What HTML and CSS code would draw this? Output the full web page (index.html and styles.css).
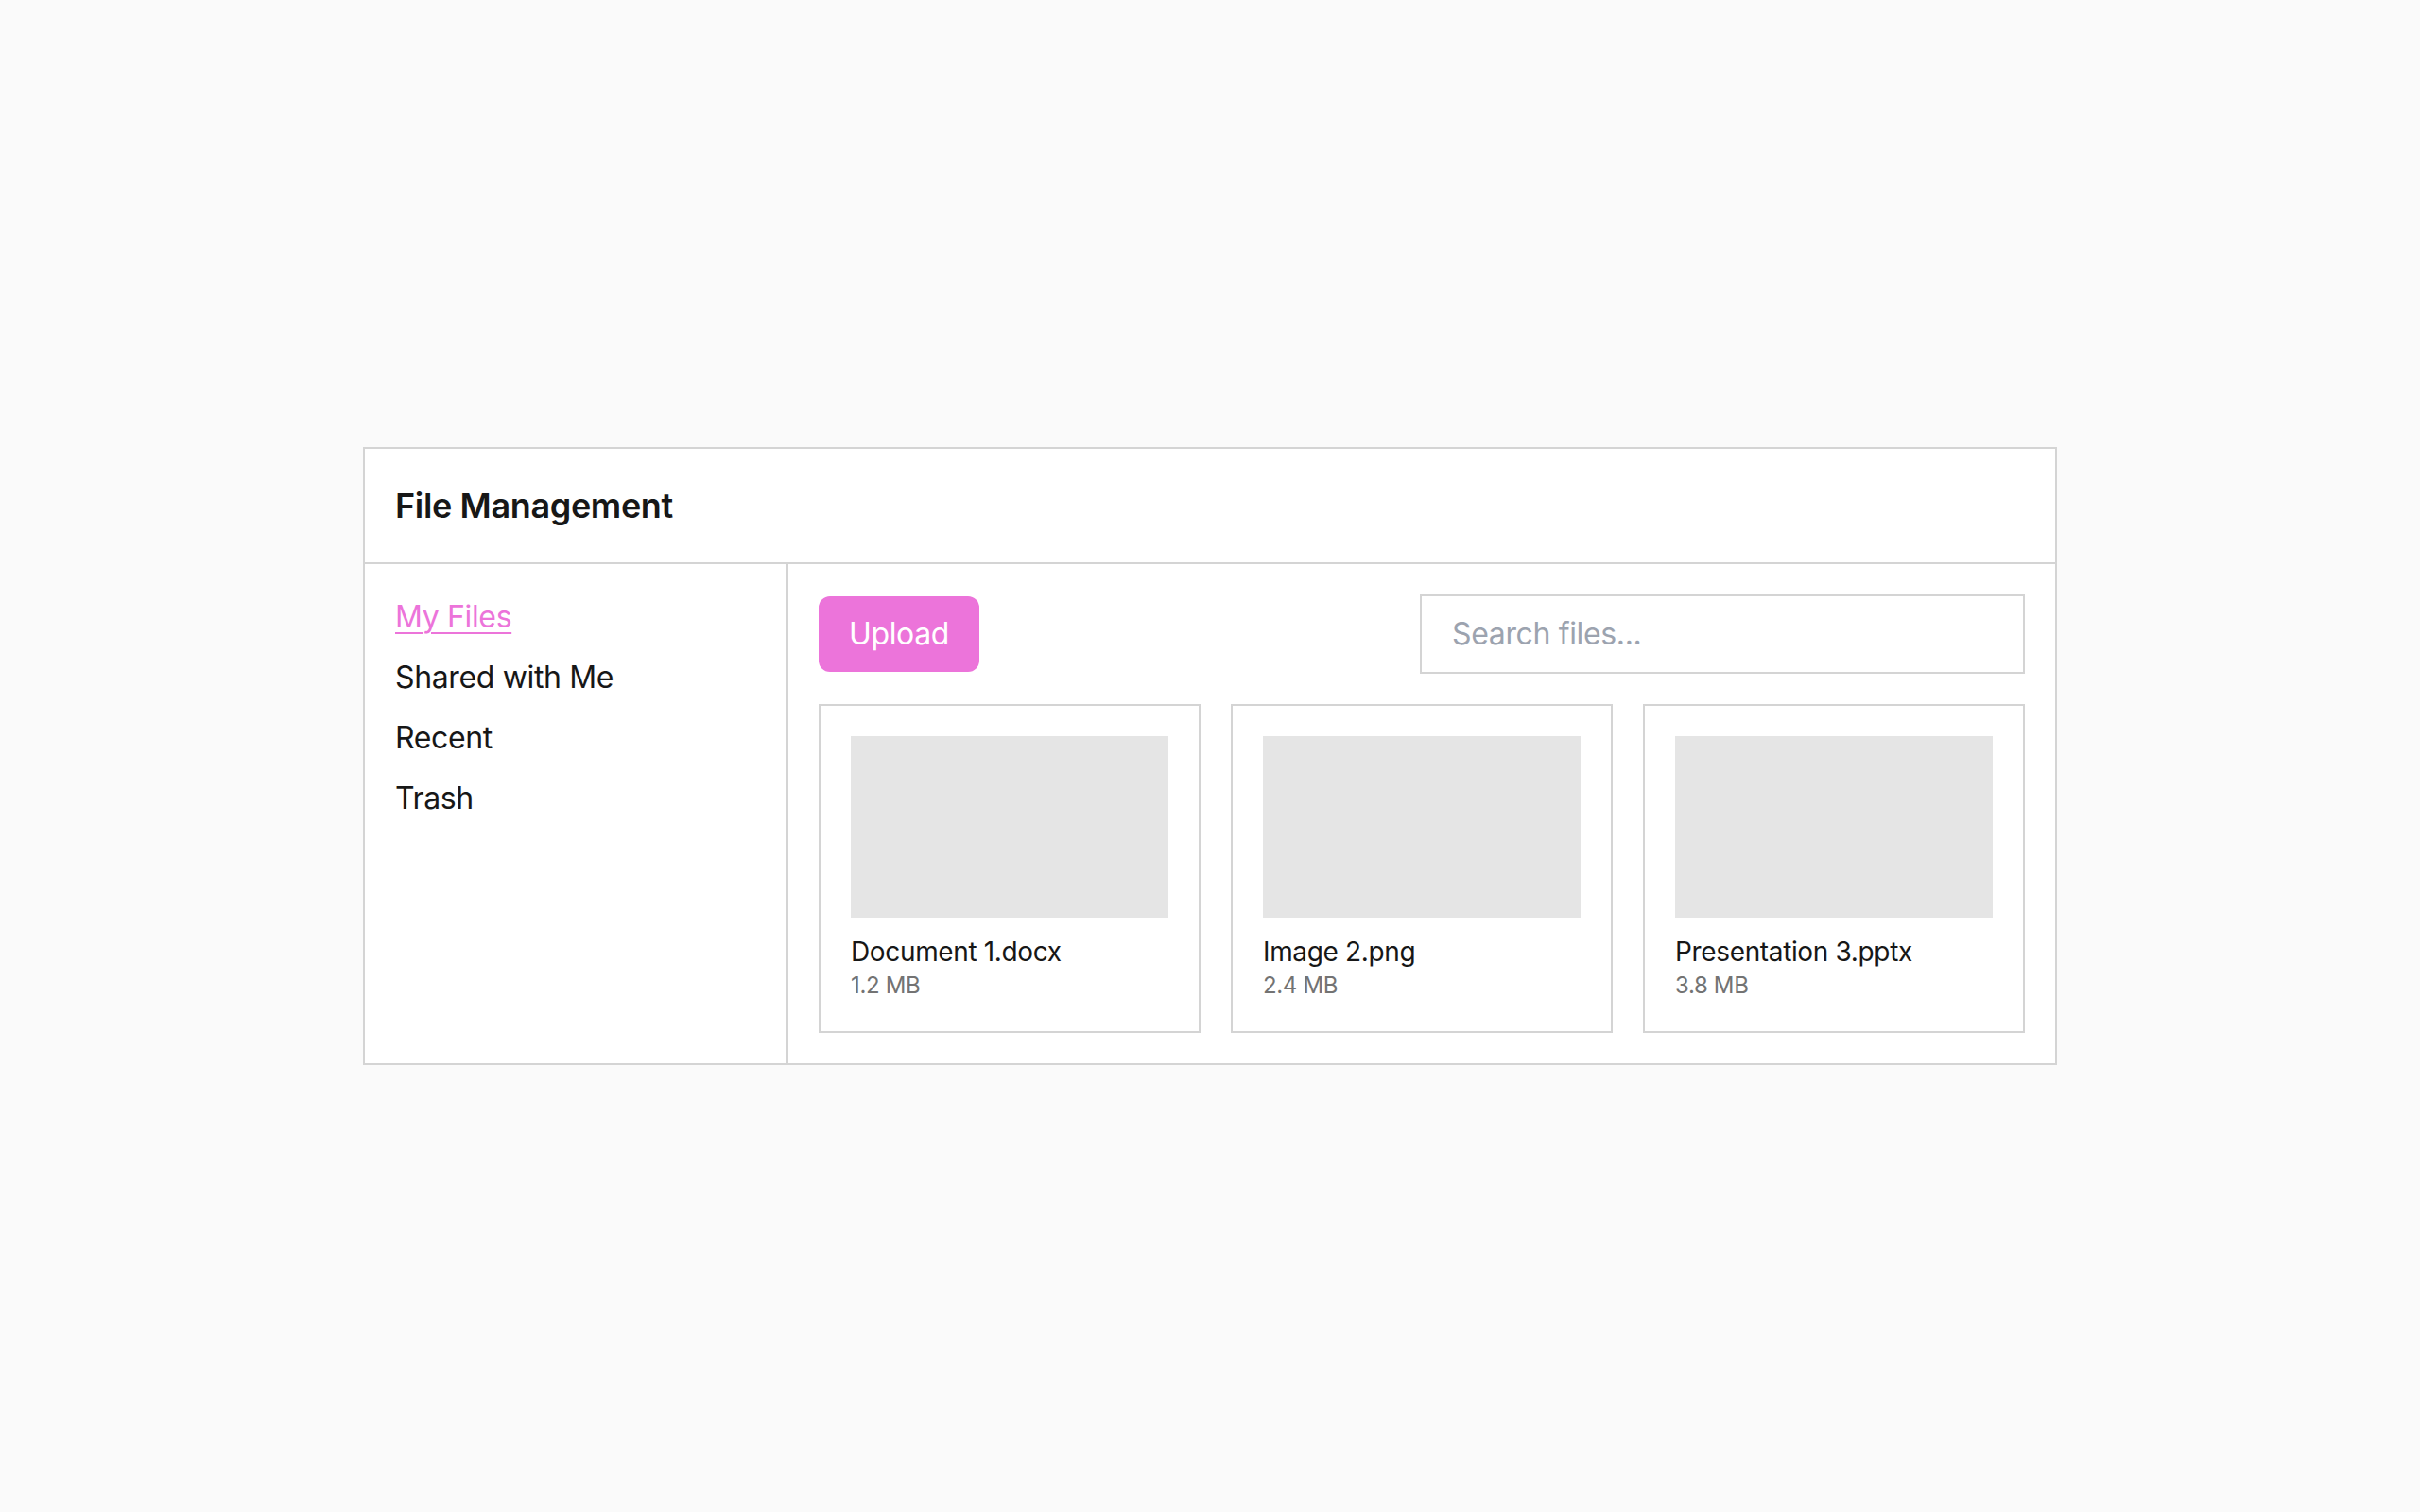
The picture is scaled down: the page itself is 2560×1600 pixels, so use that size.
FILE: index.html
```html
<!DOCTYPE html>
<html lang="en">
<head>
<meta charset="utf-8">
<title>File Management</title>
<link rel="stylesheet" href="styles.css">
</head>
<body>
<div class="page">
  <div class="panel">
    <header class="panel-header">
      <h1 class="title">File Management</h1>
    </header>
    <div class="panel-body">
      <nav class="sidebar">
        <a href="#" class="nav-link active">My Files</a>
        <a href="#" class="nav-link">Shared with Me</a>
        <a href="#" class="nav-link">Recent</a>
        <a href="#" class="nav-link">Trash</a>
      </nav>
      <main class="main">
        <div class="toolbar">
          <button class="upload-btn">Upload</button>
          <input class="search" type="text" placeholder="Search files...">
        </div>
        <div class="grid">
          <div class="file-card">
            <div class="thumb"></div>
            <div class="file-name">Document 1.docx</div>
            <div class="file-size">1.2 MB</div>
          </div>
          <div class="file-card">
            <div class="thumb"></div>
            <div class="file-name">Image 2.png</div>
            <div class="file-size">2.4 MB</div>
          </div>
          <div class="file-card">
            <div class="thumb"></div>
            <div class="file-name">Presentation 3.pptx</div>
            <div class="file-size">3.8 MB</div>
          </div>
        </div>
      </main>
    </div>
  </div>
</div>
</body>
</html>
```

FILE: styles.css
```css
* { box-sizing: border-box; }
html, body { margin: 0; padding: 0; }
body {
  background: #fafafa;
  font-family: Inter, "Noto Sans", "Liberation Sans", sans-serif;
  letter-spacing: -0.022em;
  color: #171717;
}
.page {
  min-height: 100vh;
  display: flex;
  align-items: center;
  justify-content: center;
}
.panel {
  width: 1792px;
  background: #ffffff;
  border: 2px solid #d4d4d4;
}
.panel-header {
  padding: 32px;
  border-bottom: 2px solid #d4d4d4;
}
.title {
  margin: 0;
  font-size: 36px;
  line-height: 56px;
  font-weight: 600;
  color: #171717;
}
.panel-body {
  display: flex;
}
.sidebar {
  width: 448px;
  flex-shrink: 0;
  border-right: 2px solid #d4d4d4;
  padding: 32px;
  display: flex;
  flex-direction: column;
  gap: 16px;
}
.nav-link {
  font-size: 32px;
  line-height: 48px;
  color: #171717;
  text-decoration: none;
}
.nav-link.active {
  color: #ec74da;
  text-decoration: underline;
  text-decoration-thickness: 2px;
  text-underline-offset: 5px;
}
.main {
  flex: 1;
  padding: 32px;
}
.toolbar {
  display: flex;
  justify-content: space-between;
  align-items: center;
  margin-bottom: 32px;
}
.upload-btn {
  font-family: inherit;
  letter-spacing: inherit;
  font-size: 32px;
  line-height: 48px;
  padding: 16px 32px;
  background: #ec74da;
  color: #ffffff;
  border: none;
  border-radius: 12px;
}
.search {
  width: 640px;
  font-family: inherit;
  letter-spacing: inherit;
  font-size: 32px;
  line-height: 48px;
  padding: 16px 32px;
  border: 2px solid #d4d4d4;
  border-radius: 0;
  color: #171717;
  background: #ffffff;
  outline: none;
}
.search::placeholder { color: #9ca3af; }
.grid {
  display: grid;
  grid-template-columns: repeat(3, 1fr);
  gap: 32px;
}
.file-card {
  border: 2px solid #d4d4d4;
  padding: 32px;
}
.thumb {
  height: 192px;
  background: #e5e5e5;
}
.file-name {
  margin-top: 16px;
  font-size: 28px;
  line-height: 40px;
  color: #171717;
}
.file-size {
  font-size: 24px;
  line-height: 32px;
  color: #737373;
}
```
